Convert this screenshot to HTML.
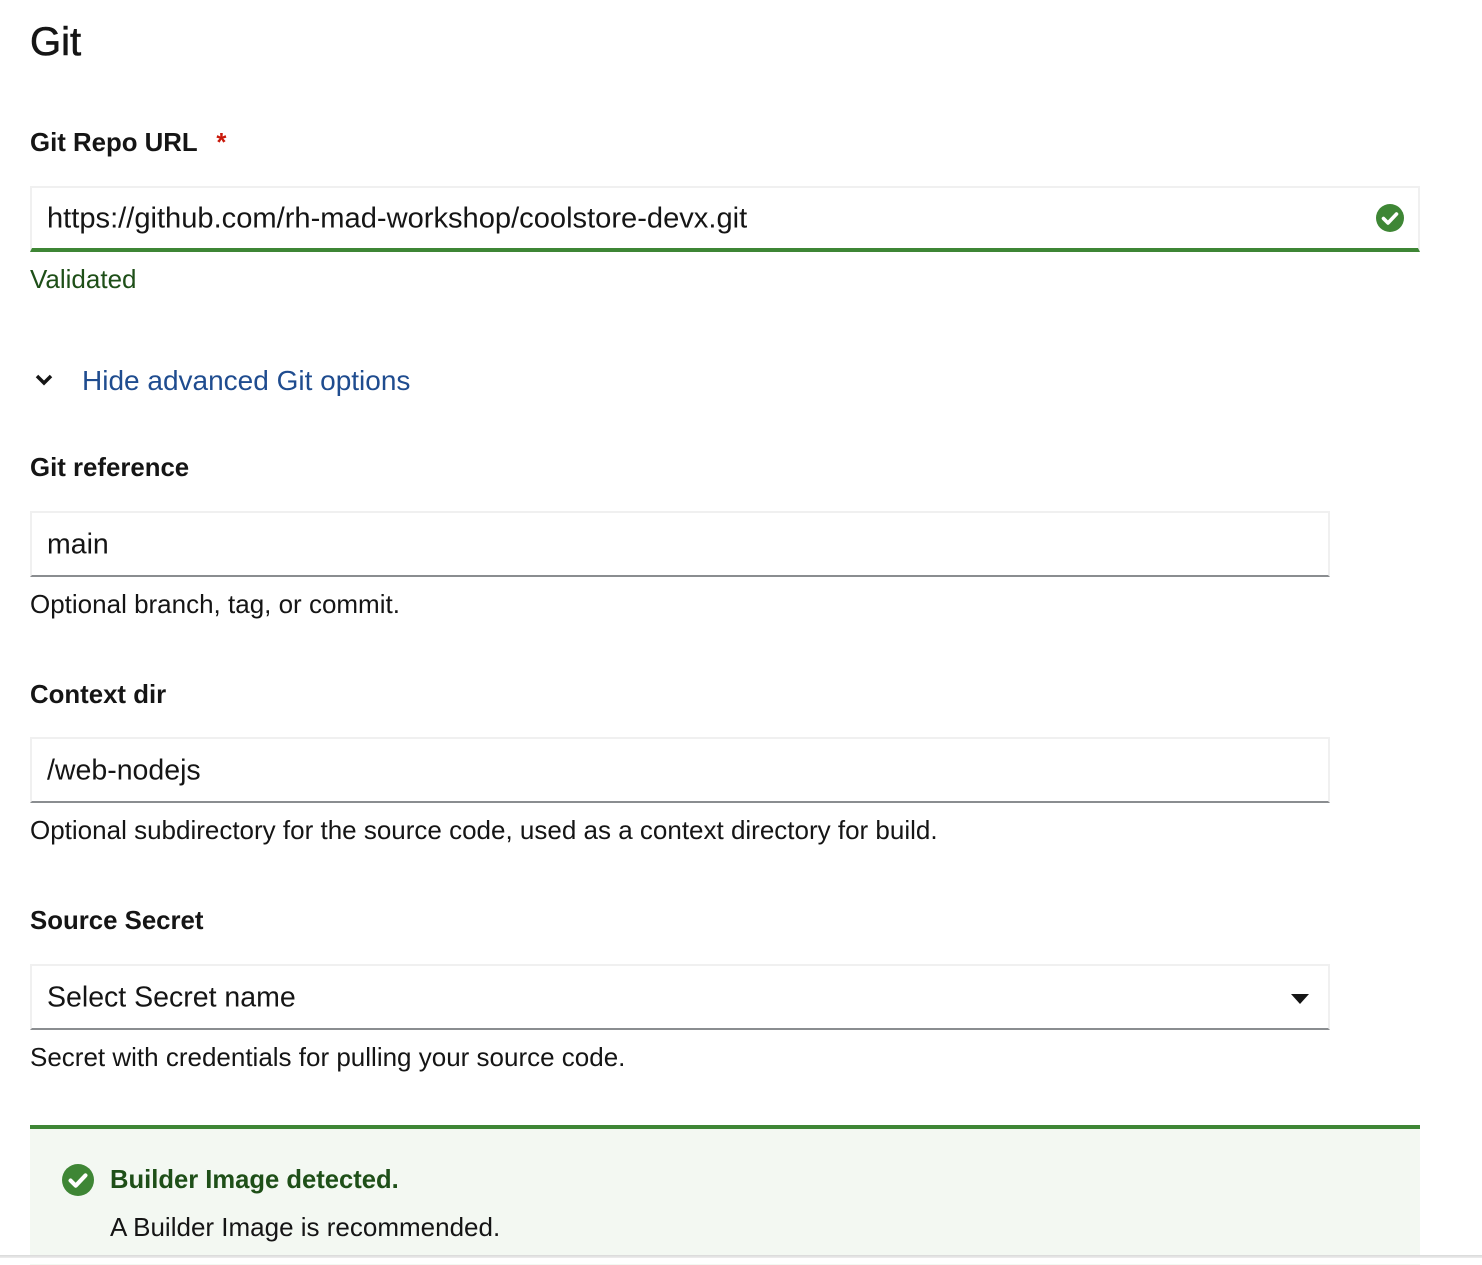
<!DOCTYPE html>
<html><head><style>
body{margin:0;width:1482px;height:1264px;background:#fff;position:relative;overflow:hidden;font-family:"Liberation Sans",sans-serif;color:#151515}
.t{position:absolute;white-space:nowrap;line-height:40px;height:40px}
.lbl{font-size:25.8px;font-weight:bold}
.help{font-size:26px}
.inp{position:absolute;left:30px;box-sizing:border-box;border:2px solid #f0f0f0;border-bottom:2px solid #8a8d90;background:#fff}
.inp span{position:absolute;left:15px;top:50%;transform:translateY(-50%);font-size:28.5px;white-space:nowrap;margin-top:1px}
</style></head><body>
<div class="t" style="left:30px;top:22px;font-size:40px;-webkit-text-stroke:0.6px #151515">Git</div>
<div class="t lbl" style="left:30px;top:123px">Git Repo URL <span style="color:#c9190b;margin-left:12px">*</span></div>
<div class="inp" style="top:186px;width:1390px;height:66px;border-bottom:4px solid #3e8635"><span style="font-size:29.1px">https://github.com/rh-mad-workshop/coolstore-devx.git</span>
<svg style="position:absolute;right:14px;top:16px" width="28" height="28" viewBox="0 0 28 28"><circle cx="14" cy="14" r="14" fill="#3e8635"/><path d="M7.5 14.5l4.5 4.5 8.5-9" stroke="#fff" stroke-width="3.6" fill="none" stroke-linecap="round" stroke-linejoin="round"/></svg></div>
<div class="t help" style="left:30px;top:259px;color:#1e4f18">Validated</div>
<svg style="position:absolute;left:35px;top:373px" width="18" height="14" viewBox="0 0 18 14"><path d="M2 3l7 7 7-7" stroke="#151515" stroke-width="3.5" fill="none"/></svg>
<div class="t" style="left:82px;top:361px;font-size:28px;color:#1f4c8f">Hide advanced Git options</div>
<div class="t lbl" style="left:30px;top:448px">Git reference</div>
<div class="inp" style="top:511px;width:1300px;height:66px"><span>main</span></div>
<div class="t help" style="left:30px;top:584px">Optional branch, tag, or commit.</div>
<div class="t lbl" style="left:30px;top:675px">Context dir</div>
<div class="inp" style="top:737px;width:1300px;height:66px"><span>/web-nodejs</span></div>
<div class="t help" style="left:30px;top:810px">Optional subdirectory for the source code, used as a context directory for build.</div>
<div class="t lbl" style="left:30px;top:901px">Source Secret</div>
<div class="inp" style="top:964px;width:1300px;height:66px"><span>Select Secret name</span>
<svg style="position:absolute;right:19px;top:28px" width="18" height="10" viewBox="0 0 18 10"><path d="M0 0h18L9 10z" fill="#151515"/></svg></div>
<div class="t help" style="left:30px;top:1037px">Secret with credentials for pulling your source code.</div>
<div style="position:absolute;left:30px;top:1125px;width:1390px;height:140px;background:#f3f8f2;border-top:4px solid #3e8635;box-sizing:border-box"></div>
<svg style="position:absolute;left:62px;top:1164px" width="32" height="32" viewBox="0 0 28 28"><circle cx="14" cy="14" r="14" fill="#3e8635"/><path d="M7.5 14.5l4.5 4.5 8.5-9" stroke="#fff" stroke-width="3.6" fill="none" stroke-linecap="round" stroke-linejoin="round"/></svg>
<div class="t" style="left:110px;top:1160px;font-size:25.6px;font-weight:bold;color:#1e4f18">Builder Image detected.</div>
<div class="t help" style="left:110px;top:1207px">A Builder Image is recommended.</div>
<div style="position:absolute;left:0;top:1255px;width:1482px;height:3px;background:linear-gradient(#d8d8d8,#eee)"></div>
<div style="position:absolute;left:0;top:1258px;width:1482px;height:6px;background:#fff"></div>
</body></html>
